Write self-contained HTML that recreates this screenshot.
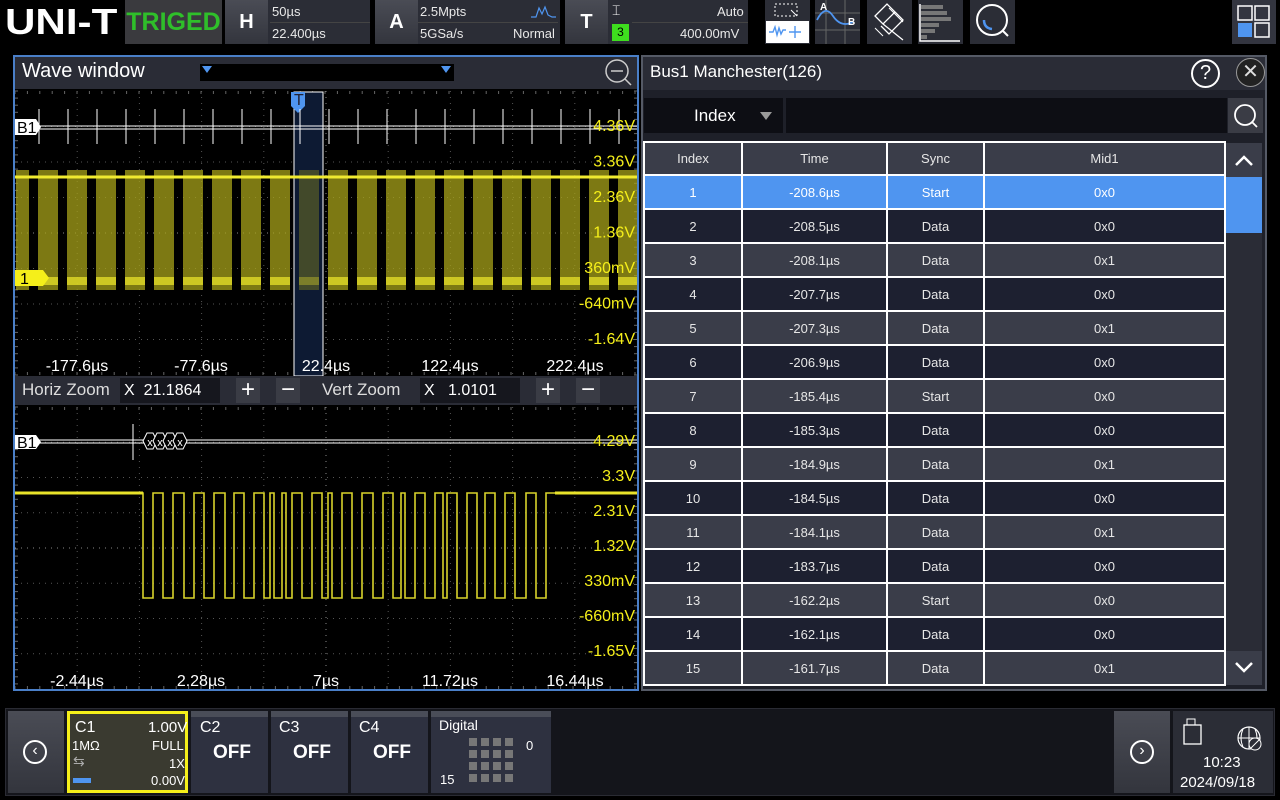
<!DOCTYPE html>
<html><head><meta charset="utf-8"><style>
*{box-sizing:border-box;margin:0;padding:0}
body{width:1280px;height:800px;background:#000;font-family:"Liberation Sans",sans-serif;color:#fff;position:relative;overflow:hidden}
.a{position:absolute}
.btn{background:linear-gradient(#4a4c55,#33353d)}
.box{background:#2b2d36}
.sm{font-size:13px;color:#e8e8e8}
table{border-collapse:collapse}
td{border:2px solid #fff;text-align:center;font-size:13px;height:34px;color:#e6e6e6}
.r1 td{background:#3a3d49}.r0 td{background:#1d2030}
.hd td{background:#3a3d49;height:33px}
.sel td{background:#4f95f0;color:#fff}
.ch{background:#2e3140;border-top:6px solid #4a4d58}
</style></head><body>
<!-- top bar -->
<div class="a" style="left:5px;top:3px;font:bold 36px/38px 'Liberation Sans';color:#fff;transform:scaleX(1.17);transform-origin:left top">UNI-T</div>
<div class="a box" style="left:125px;top:0;width:97px;height:44px;background:#3a3a3e;color:#2fbf2a;font:bold 25px/44px 'Liberation Sans';text-align:center">TRIGED</div>
<div class="a box" style="left:225px;top:0;width:145px;height:44px"></div>
<div class="a btn" style="left:225px;top:0;width:43px;height:44px;font:bold 20px/44px 'Liberation Sans';text-align:center">H</div>
<div class="a sm" style="left:272px;top:4px">50µs</div>
<div class="a" style="left:270px;top:22px;width:100px;border-top:1px solid #444"></div>
<div class="a sm" style="left:272px;top:26px">22.400µs</div>
<div class="a box" style="left:375px;top:0;width:185px;height:44px"></div>
<div class="a btn" style="left:375px;top:0;width:43px;height:44px;font:bold 20px/44px 'Liberation Sans';text-align:center">A</div>
<div class="a sm" style="left:420px;top:4px">2.5Mpts</div>
<div class="a" style="left:418px;top:22px;width:140px;border-top:1px solid #444"></div>
<div class="a sm" style="left:420px;top:26px">5GSa/s</div>
<div class="a sm" style="left:513px;top:26px">Normal</div>
<svg class="a" style="left:530px;top:5px" width="26" height="14"><path d="M1 12h5l3-9 3 6 3-7 3 8 4 2h4" fill="none" stroke="#4f95f0" stroke-width="1.2"/></svg>
<div class="a box" style="left:565px;top:0;width:183px;height:44px"></div>
<div class="a btn" style="left:565px;top:0;width:43px;height:44px;font:bold 20px/44px 'Liberation Sans';text-align:center">T</div>
<div class="a" style="left:612px;top:2px;font-size:14px;color:#fff">⌶</div>
<div class="a" style="left:612px;top:24px;width:17px;height:17px;background:#3ede1e;color:#000;font-size:12px;text-align:center;line-height:17px">3</div>
<div class="a" style="left:632px;top:22px;width:116px;border-top:1px solid #444"></div>
<div class="a sm" style="left:717px;top:4px">Auto</div>
<div class="a sm" style="left:680px;top:26px">400.00mV</div>
<!-- tool icons -->
<div class="a box" style="left:765px;top:0;width:45px;height:44px"></div>
<div class="a" style="left:766px;top:21px;width:43px;height:22px;background:#fff"></div>
<svg class="a" style="left:765px;top:0" width="45" height="44"><rect x="10" y="4" width="22" height="12" fill="none" stroke="#fff" stroke-dasharray="2 2"/><path d="M26 10l6 6" stroke="#fff"/><path d="M4 32h4l2-5 2 8 2-7 2 6 2-4h3M30 26v12M24 32h12" fill="none" stroke="#4f95f0" stroke-width="1.4"/></svg>
<div class="a box" style="left:815px;top:0;width:45px;height:44px"></div>
<svg class="a" style="left:815px;top:0" width="45" height="44"><path d="M0 13h45M0 30h45M11 0v44M30 0v44" stroke="#666" /><path d="M2 20Q10 4 18 16T38 22" fill="none" stroke="#4f95f0" stroke-width="1.8"/><text x="5" y="10" font-size="10" fill="#fff" font-weight="bold">A</text><text x="33" y="25" font-size="10" fill="#fff" font-weight="bold">B</text></svg>
<div class="a box" style="left:867px;top:0;width:45px;height:44px"></div>
<svg class="a" style="left:867px;top:0" width="45" height="44"><path d="M8 16L20 4 28 12 16 24ZM16 24l20 16M28 12l8 8-14 14-8-8" fill="none" stroke="#fff" stroke-width="1.3"/><path d="M8 28l8 8M22 8l14 14" stroke="#fff"/></svg>
<div class="a box" style="left:918px;top:0;width:45px;height:44px"></div>
<svg class="a" style="left:918px;top:0" width="45" height="44"><path d="M2 4v37h40" stroke="#fff" fill="none" stroke-width="1.5"/><g fill="#777"><rect x="3" y="5" width="22" height="4"/><rect x="3" y="11" width="26" height="4"/><rect x="3" y="17" width="30" height="4"/><rect x="3" y="23" width="18" height="4"/><rect x="3" y="29" width="14" height="4"/><rect x="3" y="35" width="6" height="4"/></g></svg>
<div class="a box" style="left:970px;top:0;width:45px;height:44px"></div>
<svg class="a" style="left:970px;top:0" width="45" height="44"><circle cx="22" cy="20" r="15" fill="none" stroke="#fff" stroke-width="2"/><path d="M33 31l5 5" stroke="#fff" stroke-width="2"/><path d="M14 20q0 8 8 9" fill="none" stroke="#4f95f0" stroke-width="2.5"/></svg>
<div class="a box" style="left:1232px;top:0;width:44px;height:44px;background:#333540"></div>
<svg class="a" style="left:1232px;top:0" width="44" height="44"><rect x="6" y="6" width="14" height="14" fill="none" stroke="#fff" stroke-width="1.5"/><rect x="23" y="6" width="14" height="14" fill="none" stroke="#fff" stroke-width="1.5"/><rect x="6" y="23" width="14" height="14" fill="#4f95f0"/><rect x="23" y="23" width="14" height="14" fill="none" stroke="#fff" stroke-width="1.5"/></svg>

<!-- wave window -->
<div class="a" style="left:13px;top:55px;width:626px;height:636px;border:2px solid #4a7fc8;background:#000"></div>
<div class="a" style="left:15px;top:57px;width:622px;height:32px;background:#2a2c36"></div>
<div class="a" style="left:22px;top:60px;font-size:20px">Wave window</div>
<div class="a" style="left:200px;top:64px;width:254px;height:17px;background:#000"></div>
<div class="a" style="left:202px;top:66px;width:0;height:0;border:5px solid transparent;border-top:7px solid #4f95f0"></div>
<div class="a" style="left:441px;top:66px;width:0;height:0;border:5px solid transparent;border-top:7px solid #4f95f0"></div>
<svg class="a" style="left:602px;top:58px" width="32" height="30"><circle cx="15" cy="13" r="11" fill="none" stroke="#ccc" stroke-width="1.5"/><path d="M9 13h12M23 21l6 6" stroke="#ccc" stroke-width="1.5"/></svg>
<svg class="a" style="left:15px;top:89px" width="622" height="600" id="g"></svg>
<!-- zoom bar -->
<div class="a" style="left:15px;top:376px;width:622px;height:29px;background:#2a2c36"></div>
<div class="a" style="left:22px;top:380px;font-size:17px;color:#ddd">Horiz Zoom</div>
<div class="a" style="left:120px;top:378px;width:100px;height:25px;background:#16171e;font-size:16px;line-height:25px;padding-left:4px">X&nbsp; 21.1864</div>
<div class="a" style="left:236px;top:378px;width:24px;height:25px;background:#3a3c45;font-size:24px;line-height:24px;text-align:center">+</div>
<div class="a" style="left:276px;top:378px;width:24px;height:25px;background:#3a3c45;font-size:24px;line-height:24px;text-align:center">−</div>
<div class="a" style="left:322px;top:380px;font-size:17px;color:#ddd">Vert Zoom</div>
<div class="a" style="left:420px;top:378px;width:100px;height:25px;background:#16171e;font-size:16px;line-height:25px;padding-left:4px">X&nbsp;&nbsp; 1.0101</div>
<div class="a" style="left:536px;top:378px;width:24px;height:25px;background:#3a3c45;font-size:24px;line-height:24px;text-align:center">+</div>
<div class="a" style="left:576px;top:378px;width:24px;height:25px;background:#3a3c45;font-size:24px;line-height:24px;text-align:center">−</div>

<!-- right panel -->
<div class="a" style="left:641px;top:55px;width:626px;height:636px;border:2px solid #555a66;background:#2a2c36"></div>
<div class="a" style="left:650px;top:62px;font-size:17px">Bus1 Manchester(126)</div>
<div class="a" style="left:1191px;top:59px;width:29px;height:29px;border:2px solid #fff;border-radius:50%;text-align:center;font-size:20px;line-height:25px">?</div>
<div class="a" style="left:1236px;top:58px;width:29px;height:29px;border:1px solid #999;background:#222;border-radius:50%;text-align:center;font-size:20px;line-height:27px;color:#ddd">✕</div>
<div class="a" style="left:643px;top:90px;width:622px;height:599px;background:#1e2029"></div>
<div class="a" style="left:644px;top:98px;width:139px;height:35px;background:#0d0e14"></div>
<div class="a" style="left:694px;top:106px;font-size:17px">Index</div>
<div class="a" style="left:760px;top:112px;border:6px solid transparent;border-top:8px solid #999"></div>
<div class="a" style="left:786px;top:98px;width:441px;height:35px;background:#0d0e14"></div>
<div class="a" style="left:1228px;top:98px;width:35px;height:35px;background:#3a3c45"></div>
<svg class="a" style="left:1228px;top:98px" width="35" height="35"><circle cx="17" cy="17" r="10" fill="none" stroke="#fff" stroke-width="1.8"/><path d="M24 24l5 5" stroke="#fff" stroke-width="1.8"/></svg>
<table class="a" style="left:643px;top:141px;width:583px">
<colgroup><col style="width:98px"><col style="width:145px"><col style="width:97px"><col></colgroup>
<tr class="hd"><td>Index</td><td>Time</td><td>Sync</td><td>Mid1</td></tr>
<tr class="sel"><td>1</td><td>-208.6µs</td><td>Start</td><td>0x0</td></tr>
<tr class="r0"><td>2</td><td>-208.5µs</td><td>Data</td><td>0x0</td></tr>
<tr class="r1"><td>3</td><td>-208.1µs</td><td>Data</td><td>0x1</td></tr>
<tr class="r0"><td>4</td><td>-207.7µs</td><td>Data</td><td>0x0</td></tr>
<tr class="r1"><td>5</td><td>-207.3µs</td><td>Data</td><td>0x1</td></tr>
<tr class="r0"><td>6</td><td>-206.9µs</td><td>Data</td><td>0x0</td></tr>
<tr class="r1"><td>7</td><td>-185.4µs</td><td>Start</td><td>0x0</td></tr>
<tr class="r0"><td>8</td><td>-185.3µs</td><td>Data</td><td>0x0</td></tr>
<tr class="r1"><td>9</td><td>-184.9µs</td><td>Data</td><td>0x1</td></tr>
<tr class="r0"><td>10</td><td>-184.5µs</td><td>Data</td><td>0x0</td></tr>
<tr class="r1"><td>11</td><td>-184.1µs</td><td>Data</td><td>0x1</td></tr>
<tr class="r0"><td>12</td><td>-183.7µs</td><td>Data</td><td>0x0</td></tr>
<tr class="r1"><td>13</td><td>-162.2µs</td><td>Start</td><td>0x0</td></tr>
<tr class="r0"><td>14</td><td>-162.1µs</td><td>Data</td><td>0x0</td></tr>
<tr class="r1"><td>15</td><td>-161.7µs</td><td>Data</td><td>0x1</td></tr>
</table>
<div class="a" style="left:1226px;top:143px;width:36px;height:542px;background:#2a2c36"></div>
<div class="a" style="left:1226px;top:143px;width:36px;height:34px;background:#3a3d49;text-align:center"><svg width="36" height="34"><path d="M10 22l8-8 8 8" fill="none" stroke="#fff" stroke-width="2.5"/></svg></div>
<div class="a" style="left:1226px;top:177px;width:36px;height:56px;background:#4f95f0"></div>
<div class="a" style="left:1226px;top:651px;width:36px;height:34px;background:#3a3d49"><svg width="36" height="34"><path d="M10 12l8 8 8-8" fill="none" stroke="#fff" stroke-width="2.5"/></svg></div>

<!-- bottom bar -->
<div class="a" style="left:5px;top:708px;width:1270px;height:88px;background:#14151b;border:1px solid #2a2b33"></div>
<div class="a btn" style="left:8px;top:711px;width:56px;height:82px"></div>
<div class="a" style="left:23px;top:740px;width:24px;height:24px;border:2px solid #fff;border-radius:50%;text-align:center;font-size:16px;line-height:18px">‹</div>
<div class="a" style="left:67px;top:711px;width:121px;height:82px;border:3px solid #f5ef1a;background:#3a3a30"></div>
<div class="a" style="left:75px;top:719px;font-size:16px">C1</div>
<div class="a" style="left:148px;top:719px;font-size:15px">1.00V</div>
<div class="a" style="left:72px;top:738px;font-size:13px">1MΩ</div>
<div class="a" style="left:152px;top:738px;font-size:13px">FULL</div>
<div class="a" style="left:73px;top:753px;font-size:14px;color:#aaa">⇆</div>
<div class="a" style="left:169px;top:756px;font-size:13px">1X</div>
<div class="a" style="left:73px;top:778px;width:18px;height:5px;background:#4f95f0"></div>
<div class="a" style="left:151px;top:773px;font-size:13px">0.00V</div>
<div class="a ch" style="left:191px;top:711px;width:77px;height:82px"></div>
<div class="a" style="left:200px;top:719px;font-size:16px">C2</div><div class="a" style="left:213px;top:742px;font:bold 19px 'Liberation Sans'">OFF</div>
<div class="a ch" style="left:271px;top:711px;width:77px;height:82px"></div>
<div class="a" style="left:279px;top:719px;font-size:16px">C3</div><div class="a" style="left:293px;top:742px;font:bold 19px 'Liberation Sans'">OFF</div>
<div class="a ch" style="left:351px;top:711px;width:77px;height:82px"></div>
<div class="a" style="left:359px;top:719px;font-size:16px">C4</div><div class="a" style="left:373px;top:742px;font:bold 19px 'Liberation Sans'">OFF</div>
<div class="a ch" style="left:431px;top:711px;width:120px;height:82px"></div>
<div class="a" style="left:439px;top:717px;font-size:14px">Digital</div>
<div class="a" style="left:526px;top:738px;font-size:13px">0</div>
<div class="a" style="left:440px;top:772px;font-size:13px">15</div>
<svg class="a" style="left:469px;top:738px" width="46" height="46"><g fill="#777"><rect x="0" y="0" width="8" height="8"/><rect x="12" y="0" width="8" height="8"/><rect x="24" y="0" width="8" height="8"/><rect x="36" y="0" width="8" height="8"/><rect x="0" y="12" width="8" height="8"/><rect x="12" y="12" width="8" height="8"/><rect x="24" y="12" width="8" height="8"/><rect x="36" y="12" width="8" height="8"/><rect x="0" y="24" width="8" height="8"/><rect x="12" y="24" width="8" height="8"/><rect x="24" y="24" width="8" height="8"/><rect x="36" y="24" width="8" height="8"/><rect x="0" y="36" width="8" height="8"/><rect x="12" y="36" width="8" height="8"/><rect x="24" y="36" width="8" height="8"/><rect x="36" y="36" width="8" height="8"/></g></svg>
<div class="a btn" style="left:1114px;top:711px;width:56px;height:82px"></div>
<div class="a" style="left:1130px;top:740px;width:24px;height:24px;border:2px solid #fff;border-radius:50%;text-align:center;font-size:16px;line-height:18px">›</div>
<div class="a" style="left:1173px;top:711px;width:100px;height:82px;background:#2b2d36"></div>
<svg class="a" style="left:1183px;top:718px" width="90" height="36"><rect x="4" y="1" width="8" height="6" fill="none" stroke="#fff"/><rect x="1" y="7" width="17" height="19" fill="none" stroke="#fff" stroke-width="1.3"/><circle cx="66" cy="20" r="11" fill="none" stroke="#fff" stroke-width="1.2"/><path d="M55 20h22M66 9v22M60 11q-4 9 0 18M72 11q4 9 0 18" fill="none" stroke="#fff"/><circle cx="72" cy="26" r="6" fill="#2b2d36" stroke="#fff"/><path d="M68 30l8-8" stroke="#fff"/></svg>
<div class="a" style="left:1203px;top:754px;font-size:15px">10:23</div>
<div class="a" style="left:1180px;top:774px;font-size:15px">2024/09/18</div>

<script>
var s=document.getElementById('g'),h='';
function L(x1,y1,x2,y2,c,w,d){h+='<line x1="'+x1+'" y1="'+y1+'" x2="'+x2+'" y2="'+y2+'" stroke="'+c+'" stroke-width="'+(w||1)+'"'+(d?' stroke-dasharray="'+d+'"':'')+'/>';}
function T(x,y,t,c,a){h+='<text x="'+x+'" y="'+y+'" fill="'+(c||'#ddd')+'" font-size="16" font-family="Liberation Sans" text-anchor="'+(a||'start')+'">'+t+'</text>';}
function grid(y0,y1){for(var i=1;i<10;i++){var x=i*62.2;L(x,y0,x,y1,i==5?'#888':'#555',1,'1 5');}
 var hh=(y1-y0)/8;for(var j=1;j<8;j++){var y=y0+j*hh;L(0,y,622,y,j==4?'#888':'#555',1,'1 5');}
 for(var k=0;k<622;k+=12.4){L(k,y0,k,y0+3,'#666');L(k,y1-3,k,y1,'#666');}
 for(var m=y0;m<y1;m+=7.1){L(0,m,3,m,'#666');L(619,m,622,m,'#666');}}
grid(2,286);grid(318,600);
h+='<rect x="279" y="3" width="29" height="284" fill="#0d1a33" stroke="#fff" stroke-width="1"/>';
h+='<path d="M276 3h14v14l-7 7-7-7z" fill="#4f95f0"/>';T(279,16,'T','#223','start');
L(0,37,622,37,'#fff',1);L(0,40,622,40,'#fff',1);
for(var i=0;i<21;i++){var x=24+i*29;L(x,20,x,55,'#fff',1);}
h+='<path d="M0 30h21l5 8-5 8H0z" fill="#fff"/>';T(2,44,'B1','#000');
for(var i=0;i<23;i++){var x=i*29-6;var xs=Math.max(x,1),w=Math.min(x+20,622)-xs;if(w<=0)continue;
 var op=(i==10)?0.35:0.75;
 h+='<rect x="'+xs+'" y="81" width="'+w+'" height="120" fill="#a7a21a" opacity="'+op+'"/>';
 h+='<rect x="'+xs+'" y="188" width="'+w+'" height="8" fill="#e8e22a" opacity="'+op+'"/>';}
L(0,88,622,88,'#f0ea30',3);
h+='<path d="M0 181h28l6 8-6 8H0z" fill="#f5ef1a"/>';T(5,195,'1','#000');
var vt=['4.36V','3.36V','2.36V','1.36V','360mV','-640mV','-1.64V'];
for(var i=0;i<7;i++)T(620,42+i*35.5,vt[i],'#f5ef1a','end');
var ht=[['-177.6µs',62],['-77.6µs',186],['22.4µs',311],['122.4µs',435],['222.4µs',560]];
for(var i=0;i<5;i++)T(ht[i][1],282,ht[i][0],'#fff','middle');
L(0,351,622,351,'#fff',1);L(0,354,622,354,'#fff',1);
L(118,335,118,371,'#fff',1);
for(var i=0;i<4;i++){var x=128+i*10;h+='<path d="M'+x+' 352l4-8h6l4 8-4 8h-6z" fill="#000" stroke="#fff"/>';h+='<text x="'+(x+7)+'" y="357" fill="#fff" font-size="11" text-anchor="middle" font-family="Liberation Sans">x</text>';}
h+='<path d="M0 346h21l5 7-5 7H0z" fill="#fff"/>';T(2,359,'B1','#000');
var p='M0 404H128';var x=128,hi=true;var segs=[10,10,10,11,10,10,10,11,9,10,10,10,6,4,8,4,6,10,10,10,6,4,10,10,10,11,10,10,8,4,10,10,10,8,4,10,10,10,8];
for(var i=0;x<535;i++){var sg=segs[i%segs.length];var y=hi?509:404;p+='V'+y+'H'+(x+sg);x+=sg;hi=!hi;}
p+='V404H622';h+='<path d="'+p+'" fill="none" stroke="#d8d22a" stroke-width="1.6"/>';
L(0,404,128,404,'#e8e22a',3);L(540,404,622,404,'#e8e22a',3);
var vb=['4.29V','3.3V','2.31V','1.32V','330mV','-660mV','-1.65V'];
for(var i=0;i<7;i++)T(620,357+i*35,vb[i],'#f5ef1a','end');
var hb=[['-2.44µs',62],['2.28µs',186],['7µs',311],['11.72µs',435],['16.44µs',560]];
for(var i=0;i<5;i++)T(hb[i][1],597,hb[i][0],'#fff','middle');
s.innerHTML=h;
</script>
</body></html>
